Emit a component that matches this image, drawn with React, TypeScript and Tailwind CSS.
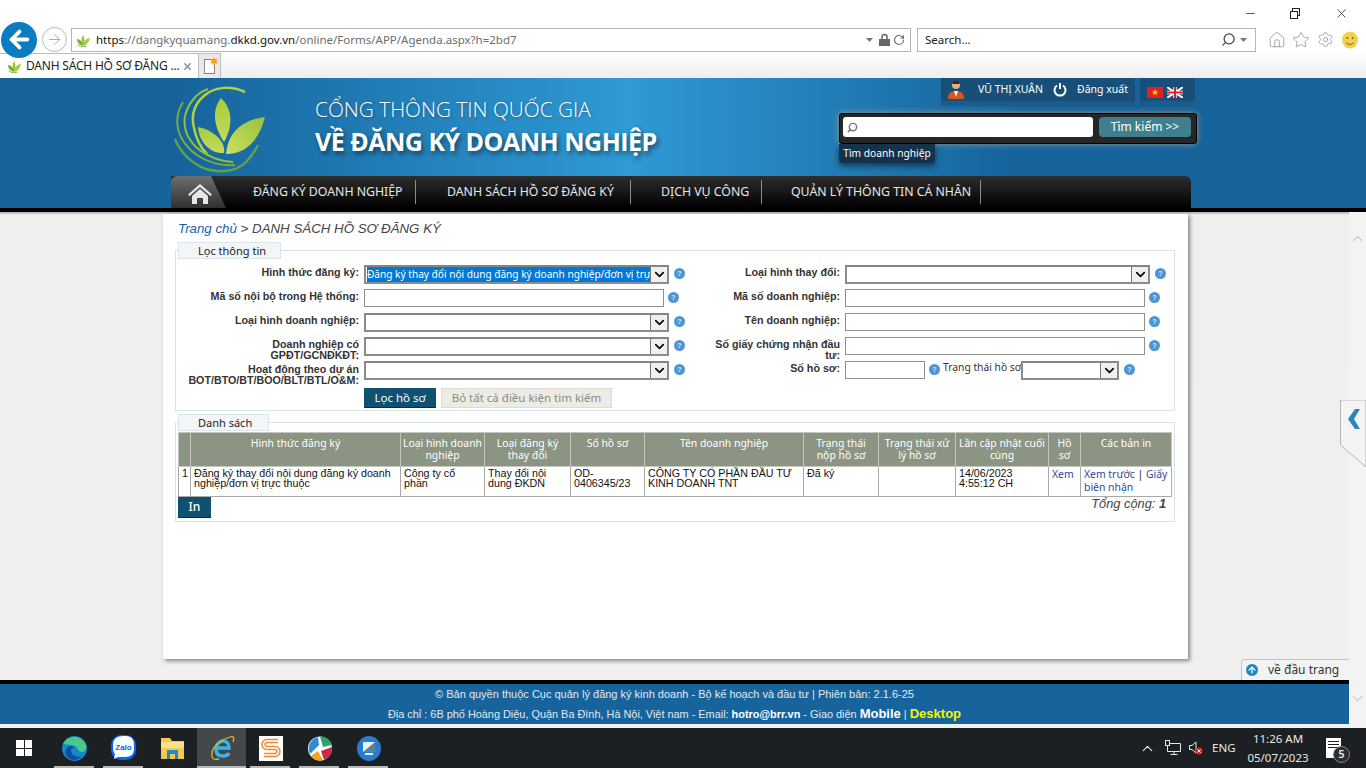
import type { ReactNode } from "react";
import { ChevronUp, Home, RotateCw, Search, Star, Settings, ChevronDown, ArrowRight, ArrowLeft, ArrowUp, X, Minus } from "lucide-react";

const tahoma = "[font-family:'Noto_Sans',sans-serif]";
const arial = "[font-family:'Liberation_Sans',Arial,sans-serif]";

function Favicon() {
  return (
    <svg width="16" height="16" viewBox="0 0 16 16">
      <path d="M8 14C6 10 6 6 8 3c2 3 2 7 0 11z" fill="#9cc23a" />
      <path d="M8 14C4 13 2 10 2 7c3 0 6 3 6 7z" fill="#7fae2c" />
      <path d="M8 14c4-1 6-4 7-8-4 0-7 4-7 8z" fill="#a9cc3f" />
      <path d="M3 13c2 2 6 2 9 1" fill="none" stroke="#5f9a3a" strokeWidth="1" strokeDasharray="2 1" />
    </svg>
  );
}

function Logo() {
  return (
    <svg width="100" height="92" viewBox="1 2 100 92">
      <defs>
        <linearGradient id="leafA" x1="0" y1="0" x2="0" y2="1">
          <stop offset="0" stopColor="#a8cc3c" />
          <stop offset="1" stopColor="#c4da5c" />
        </linearGradient>
        <linearGradient id="leafB" x1="1" y1="0" x2="0" y2="1">
          <stop offset="0" stopColor="#97c23c" />
          <stop offset="1" stopColor="#cce05e" />
        </linearGradient>
      </defs>
      <path d="M51 16C43 26 42 42 54 60C63 45 63 27 51 16z" fill="url(#leafA)" />
      <path d="M28 45C29 60 40 72 54 71C56 60 44 48 28 45z" fill="url(#leafA)" />
      <path d="M95 35C72 38 58 50 56 72C78 72 90 55 95 35z" fill="url(#leafB)" />
      <path d="M75 10C62 4 46 4 35 13C24 22 21 34 24 46C26 56 30 65 37 72" fill="none" stroke="#b4cf3f" strokeWidth="2.5" />
      <path d="M38 7C26 11 18 22 15 34C13 46 17 56 26 65C36 74 48 79 63 80" fill="none" stroke="#8fbf3c" strokeWidth="2" />
      <path d="M13 20C8 28 6 38 8 47C11 60 22 72 36 78C45 82 55 84 65 83" fill="none" stroke="#7fb03a" strokeWidth="1.8" />
      <path d="M5 57C10 70 22 82 36 87C50 91 66 90 76 80C81 75 85 69 88 63" fill="none" stroke="#62a24a" strokeWidth="2.4" />
    </svg>
  );
}

function HelpIcon({ className = "" }: { className?: string }) {
  return (
    <span className={`inline-flex h-[11px] w-[11px] shrink-0 items-center justify-center rounded-full bg-[#4f94d4] text-[7px] font-bold leading-none text-[#d8e8f6] ${arial} ${className}`}>
      ?
    </span>
  );
}

function FakeSelect({ w, text }: { w: number; text?: string }) {
  return (
    <div style={{ width: w }} className="flex h-[19px] shrink-0 items-stretch border-2 border-[#8c8c8c] border-t-[#858585] bg-white">
      <div className="flex min-w-0 flex-1 items-center overflow-hidden pl-[1px]">
        {text && (
          <span className={`block h-[15px] w-full whitespace-nowrap bg-[#0078d7] text-[10.1px] leading-[15px] text-white ${tahoma}`}>{text}</span>
        )}
      </div>
      <div className="flex w-[17px] items-center justify-center border-l border-[#777] bg-[#efefef]">
        <ChevronDown size={15} strokeWidth={2.6} className="text-black" />
      </div>
    </div>
  );
}

function FakeInput({ w }: { w: number }) {
  return <div style={{ width: w }} className="h-[18px] shrink-0 border border-[#8f8f8f] bg-white" />;
}

function FormRow({ label, labelW, labelClass, children }: { label: string; labelW: number; labelClass?: string; children: ReactNode }) {
  return (
    <div className="flex h-[24px] items-start">
      <div style={{ width: labelW }} className={`mr-[5px] shrink-0 text-right text-[10.7px] font-bold leading-[11px] text-[#333] ${arial} ${labelClass ?? "pt-[2px]"}`}>
        {label}
      </div>
      {children}
    </div>
  );
}

function Legend({ w, children }: { w: number; children: ReactNode }) {
  return (
    <div style={{ width: w }} className={`ml-[3px] h-[17px] border border-[#dbe6ec] bg-[#f3f5f9] pl-[19px] text-[11px] leading-[15px] text-[#222] ${tahoma}`}>
      {children}
    </div>
  );
}

function Chrome() {
  return (
    <div className={`relative h-[78px] shrink-0 bg-white ${tahoma}`}>
      <div className="flex h-[27px] items-center justify-end text-[#222]">
        <Minus size={13} strokeWidth={1.4} className="mr-[33px]" />
        <span className="relative mr-[33px] h-[11px] w-[11px]">
          <span className="absolute left-[2px] top-0 h-[8px] w-[8px] border border-[#222]" />
          <span className="absolute bottom-0 left-0 h-[8px] w-[8px] border border-[#222] bg-white" />
        </span>
        <X size={15} strokeWidth={1.2} className="mr-[17px]" />
      </div>
      <div className="flex h-[25px] items-center">
        <div className="z-10 ml-[1px] flex h-[36px] w-[36px] items-center justify-center rounded-full bg-[#0a7cc1]">
          <ArrowLeft size={27} strokeWidth={3.4} className="text-white" />
        </div>
        <div className="ml-[5px] flex h-[25px] w-[25px] items-center justify-center rounded-full border border-[#b9b9b9]">
          <ArrowRight size={17} strokeWidth={1.3} className="text-[#a5a5a5]" />
        </div>
        <div className="ml-[4px] flex h-[24px] w-[840px] items-center border border-[#b5b5b5] pl-[3px]">
          <Favicon />
          <div className="ml-[5px] flex-1 text-[11.5px] text-[#6d6d6d]">
            <span className="text-[#111]">https</span>://dangkyquamang.<span className="text-[#111]">dkkd.gov.vn</span>/online/Forms/APP/Agenda.aspx?h=2bd7
          </div>
          <svg width="7" height="4" viewBox="0 0 7 4" className="mr-[6px]"><path d="M0 0h7L3.5 4z" fill="#777" /></svg>
          <svg width="11" height="13" viewBox="0 0 11 13" className="mr-[3px]">
            <path d="M3 6V4a2.500 2.500 0 0 1 5 0v2" fill="none" stroke="#666" strokeWidth="1.5" />
            <rect y="6" width="11" height="7" fill="#666" />
          </svg>
          <RotateCw size={12} strokeWidth={2.2} className="mr-[5px] text-[#666]" />
        </div>
        <div className="ml-[6px] flex h-[24px] w-[339px] items-center border border-[#b5b5b5] pl-[7px] text-[11.5px] text-[#222]">
          <span className="flex-1">Search...</span>
          <Search size={15} strokeWidth={2} className="mr-[4px] -scale-x-100 text-[#444]" />
          <svg width="7" height="4" viewBox="0 0 7 4" className="mr-[8px]"><path d="M0 0h7L3.5 4z" fill="#777" /></svg>
        </div>
        <Home size={18} strokeWidth={1} className="ml-[12px] text-[#8a8a8a]" />
        <Star size={18} strokeWidth={1} className="ml-[6px] text-[#8a8a8a]" />
        <Settings size={17} strokeWidth={1} className="ml-[7px] text-[#8a8a8a]" />
        <svg width="16" height="18" viewBox="0 0 16 18" className="ml-[8px]">
          <ellipse cx="8" cy="9" rx="8" ry="8.6" fill="#f0d24c" />
          <circle cx="5.3" cy="7" r="1" fill="#7a6a20" />
          <circle cx="10.7" cy="7" r="1" fill="#7a6a20" />
          <path d="M4 11.5c2 2.500 6 2.500 8 0" fill="none" stroke="#7a6a20" strokeWidth="1" />
        </svg>
      </div>
      <div className="flex h-[26px] items-end bg-[linear-gradient(180deg,#ffffff_0%,#eeeeee_100%)]">
        <div className="flex h-[25px] w-[199px] items-center border-r border-t border-[#bdbdbd] bg-white pl-[6px] text-[#1d1d1d]">
          <Favicon />
          <span className="ml-[4px] whitespace-nowrap text-[12px] tracking-[-0.2px]">DANH SÁCH HỒ SƠ ĐĂNG ...</span>
          <X size={11} strokeWidth={3} className="ml-auto mr-[5px] text-[#888]" />
        </div>
        <div className="flex h-[25px] w-[22px] items-center justify-center border-r border-t border-[#bdbdbd] bg-[#e9e9e9]">
          <span className="relative block h-[15px] w-[11px] border border-[#888] bg-white">
            <span className="absolute -right-[4px] -top-[4px] text-[10px] leading-none text-[#f0a020]">✱</span>
          </span>
        </div>
      </div>
    </div>
  );
}

function Header() {
  const navItems = [
    { t: "ĐĂNG KÝ DOANH NGHIỆP", pl: 27, w: 190 },
    { t: "DANH SÁCH HỒ SƠ ĐĂNG KÝ", pl: 31, w: 215 },
    { t: "DỊCH VỤ CÔNG", pl: 30, w: 131 },
    { t: "QUẢN LÝ THÔNG TIN CÁ NHÂN", pl: 29, w: 219 },
  ];
  return (
    <div className="h-[134px] shrink-0 border-b-4 border-black bg-[linear-gradient(90deg,#16629b_0%,#16629b_12%,#2f9ad4_46%,#16629b_75%,#16629b_100%)]">
      <div className="ml-[171px] flex h-[98px] w-[1026px]">
        <div className="w-[144px] shrink-0 pt-[6px]">
          <Logo />
        </div>
        <div className="w-[524px] shrink-0 pt-[18px] [font-family:'Open_Sans',sans-serif]">
          <div className="text-[20.8px] font-light leading-[26px] text-white [text-shadow:1px_1px_3px_rgba(0,0,0,.25)]">CỔNG THÔNG TIN QUỐC GIA</div>
          <div className="mt-[3px] text-[25px] font-bold leading-[33px] tracking-[-0.5px] text-white [text-shadow:2px_3px_5px_rgba(0,0,0,.5)]">VỀ ĐĂNG KÝ DOANH NGHIỆP</div>
        </div>
        <div className="w-[358px] shrink-0">
          <div className={`flex h-[28px] justify-end pr-[2px] text-[10.5px] text-white ${tahoma}`}>
            <div className="flex w-[194px] items-start bg-[#1a5c8c]">
              <div className="flex h-[23px] w-full items-center whitespace-nowrap bg-[#184f78] pl-[6px]">
                <svg width="18" height="20" viewBox="0 0 18 20">
                  <circle cx="9" cy="5" r="4" fill="#e0b184" />
                  <path d="M5 3c1-3 7-3 8 0l-1 1H6z" fill="#3a2a1e" />
                  <path d="M1 19c0-6 3-8 8-8s8 2 8 8z" fill="#d9541e" />
                  <path d="M7 11h4l-2 6z" fill="#fff" />
                </svg>
                <span className="ml-[13px]">VŨ THỊ XUÂN</span>
                <svg width="14" height="15" viewBox="0 0 14 15" className="ml-[10px]">
                  <path d="M4 3.5a5.500 5.500 0 1 0 6 0" fill="none" stroke="#fff" strokeWidth="2" />
                  <path d="M7 1v6" stroke="#fff" strokeWidth="2" />
                </svg>
                <span className="ml-[10px]">Đăng xuất</span>
              </div>
            </div>
            <div className="ml-[5px] flex w-[55px] items-start bg-[#1a5c8c]">
              <div className="flex h-[23px] w-full items-center bg-[#184f78] pl-[7px] pt-[5px]">
                <svg width="16" height="11" viewBox="0 0 16 11">
                  <rect width="16" height="11" fill="#e8201c" />
                  <path d="M8 2l.9 2.400h2.500l-2 1.500.8 2.400-2.200-1.500-2.200 1.500.8-2.400-2-1.500h2.500z" fill="#f7e017" />
                </svg>
                <svg width="16" height="11" viewBox="0 0 16 11" className="ml-[4px]">
                  <rect width="16" height="11" fill="#2c3f86" />
                  <path d="M0 0l16 11M16 0L0 11" stroke="#fff" strokeWidth="2" />
                  <path d="M8 0v11M0 5.500h16" stroke="#fff" strokeWidth="3.500" />
                  <path d="M8 0v11M0 5.500h16" stroke="#d22" strokeWidth="2" />
                </svg>
              </div>
            </div>
          </div>
          <div className={`mt-[7px] flex h-[31px] items-start rounded-[3px] border border-black bg-[#262626] pl-[3px] pt-[3px] shadow-[0_0_6px_rgba(200,170,130,.7)] ${tahoma}`}>
            <div className="flex h-[20px] w-[250px] items-center rounded-[3px] bg-white pl-[4px]">
              <Search size={11} strokeWidth={3.2} className="-scale-x-100 text-[#777]" />
            </div>
            <div className="ml-[6px] flex h-[20px] w-[92px] items-center justify-center rounded-[4px] bg-[#3f7f8e] text-[12px] text-white">Tìm kiếm &gt;&gt;</div>
          </div>
          <div className={`h-[19px] w-[96px] rounded-b-[3px] bg-[#16324a] text-center text-[10.2px] leading-[18px] text-white shadow-[0_3px_6px_rgba(0,0,0,.5)] ${tahoma}`}>Tìm doanh nghiệp</div>
        </div>
      </div>
      <div className={`ml-[171px] flex h-[32px] w-[1020px] items-center rounded-tr-[6px] bg-[linear-gradient(180deg,#2e2e2e_0%,#000000_100%)] text-[12.3px] text-[#e6e6e6] ${tahoma}`}>
        <div className="relative h-[32px] w-[55px] shrink-0 overflow-hidden rounded-tl-[6px]">
          <div className="absolute inset-0 bg-[linear-gradient(180deg,#6f6f6f_0%,#2f2f2f_100%)] [clip-path:polygon(0_0,40px_0,55px_32px,0_32px)]" />
          <svg width="24" height="20" viewBox="0 0 24 20" className="absolute left-[17px] top-[8px]">
            <path d="M12 0L0 10.500l1.500 1.500L12 3l10.500 9L24 10.500z" fill="#e8e8e8" />
            <path d="M4 12L12 5l8 7v8h-5v-6h-6v6H4z" fill="#e8e8e8" />
          </svg>
        </div>
        {navItems.map((n) => (
          <div key={n.t} style={{ paddingLeft: n.pl, width: n.w }} className="flex h-[24px] shrink-0 items-center whitespace-nowrap border-r border-[#8c8c8c] pt-[1px]">
            {n.t}
          </div>
        ))}
      </div>
    </div>
  );
}

function FilterBox() {
  return (
    <div className="ml-[12px] w-[1000px]">
      <div className="relative z-10 h-[17px]"><Legend w={103}>Lọc thông tin</Legend></div>
      <div className="-mt-[9px] h-[161px] border border-[#d6e2e6] pt-[14px]">
        <div className="flex">
          <div className="w-[490px] shrink-0">
            <FormRow label="Hình thức đăng ký:" labelW={183}>
              <FakeSelect w={305} text="Đăng ký thay đổi nội dung đăng ký doanh nghiệp/đơn vị trự" />
              <HelpIcon className="ml-[5px] mt-[3px]" />
            </FormRow>
            <FormRow label="Mã số nội bộ trong Hệ thống:" labelW={183}>
              <FakeInput w={300} />
              <HelpIcon className="ml-[4px] mt-[3px]" />
            </FormRow>
            <FormRow label="Loại hình doanh nghiệp:" labelW={183}>
              <FakeSelect w={305} />
              <HelpIcon className="ml-[5px] mt-[3px]" />
            </FormRow>
            <FormRow label="Doanh nghiệp có GPĐT/GCNĐKĐT:" labelW={183} labelClass="pt-[2px] pl-[60px]">
              <FakeSelect w={305} />
              <HelpIcon className="ml-[5px] mt-[3px]" />
            </FormRow>
            <FormRow label="Hoạt động theo dự án BOT/BTO/BT/BOO/BLT/BTL/O&M:" labelW={183} labelClass="pt-[3px]">
              <FakeSelect w={305} />
              <HelpIcon className="ml-[5px] mt-[3px]" />
            </FormRow>
          </div>
          <div className="flex-1">
            <FormRow label="Loại hình thay đổi:" labelW={174}>
              <FakeSelect w={305} />
              <HelpIcon className="ml-[5px] mt-[3px]" />
            </FormRow>
            <FormRow label="Mã số doanh nghiệp:" labelW={174}>
              <FakeInput w={300} />
              <HelpIcon className="ml-[4px] mt-[3px]" />
            </FormRow>
            <FormRow label="Tên doanh nghiệp:" labelW={174}>
              <FakeInput w={300} />
              <HelpIcon className="ml-[4px] mt-[3px]" />
            </FormRow>
            <FormRow label="Số giấy chứng nhận đầu tư:" labelW={174} labelClass="pt-[2px] pl-[46px]">
              <FakeInput w={300} />
              <HelpIcon className="ml-[4px] mt-[3px]" />
            </FormRow>
            <FormRow label="Số hồ sơ:" labelW={174}>
              <FakeInput w={80} />
              <HelpIcon className="ml-[4px] mt-[3px]" />
              <span className={`ml-[3px] w-[78px] shrink-0 whitespace-nowrap text-[10.3px] leading-[13px] text-[#333] ${tahoma}`}>Trạng thái hồ sơ</span>
              <FakeSelect w={98} />
              <HelpIcon className="ml-[5px] mt-[3px]" />
            </FormRow>
          </div>
        </div>
        <div className={`ml-[188px] mt-[3px] flex h-[20px] text-[11.5px] ${tahoma}`}>
          <div className="flex w-[72px] items-center justify-center border-b border-[#0c2a3e] bg-[#0f5170] text-white">Lọc hồ sơ</div>
          <div className="ml-[5px] flex w-[171px] items-center justify-center border border-[#dcdcd0] bg-[#ecece4] text-[#8a8a8a]">Bỏ tất cả điều kiện tìm kiếm</div>
        </div>
      </div>
    </div>
  );
}

const cols = [12, 210, 84, 86, 74, 159, 75, 77, 93, 32, 91];

function ResultTable() {
  const th = `border border-[#c4c8c0] px-[2px] pt-[4px] align-top text-center text-[10.4px] font-normal leading-[12px] text-white ${tahoma}`;
  const td = `border border-[#a9a9a9] px-[3px] pt-[1px] align-top text-[10.7px] leading-[10px] text-[#111] ${arial}`;
  const linkTd = `border border-[#a9a9a9] px-[3px] pt-[1px] align-top text-[10.4px] leading-[13px] text-[#2b4a9a] ${tahoma}`;
  return (
    <table className="ml-[2px] w-[993px] table-fixed border-collapse">
      <colgroup>
        {cols.map((c, i) => (
          <col key={i} style={{ width: c }} />
        ))}
      </colgroup>
      <thead>
        <tr className="h-[34px] bg-[#8c9584]">
          <th className={th} />
          <th className={th}>Hình thức đăng ký</th>
          <th className={th}>Loại hình doanh nghiệp</th>
          <th className={th}>Loại đăng ký thay đổi</th>
          <th className={th}>Số hồ sơ</th>
          <th className={th}>Tên doanh nghiệp</th>
          <th className={th}>Trạng thái nộp hồ sơ</th>
          <th className={th}>Trạng thái xử lý hồ sơ</th>
          <th className={th}>Lần cập nhật cuối cùng</th>
          <th className={th}>Hồ sơ</th>
          <th className={th}>Các bản in</th>
        </tr>
      </thead>
      <tbody>
        <tr className="h-[30px] bg-white">
          <td className={td}>1</td>
          <td className={td}>Đăng ký thay đổi nội dung đăng ký doanh nghiệp/đơn vị trực thuộc</td>
          <td className={`${td} pr-[14px]`}>Công ty cổ phần</td>
          <td className={td}>Thay đổi nội dung ĐKDN</td>
          <td className={td}>OD-0406345/23</td>
          <td className={td}>CÔNG TY CỔ PHẦN ĐẦU TƯ KINH DOANH TNT</td>
          <td className={td}>Đã ký</td>
          <td className={td} />
          <td className={td}>14/06/2023 4:55:12 CH</td>
          <td className={linkTd}>Xem</td>
          <td className={linkTd}>
            <div className="whitespace-nowrap">
              Xem trước <span className="text-[#222]">|</span> Giấy
            </div>
            <div>biên nhận</div>
          </td>
        </tr>
      </tbody>
    </table>
  );
}

function ListBox() {
  return (
    <div className="ml-[12px] mt-[3px] w-[1000px]">
      <div className="relative z-10 h-[18px]"><Legend w={91}>Danh sách</Legend></div>
      <div className="-mt-[10px] h-[100px] border border-[#d6e2e6] pt-[9px]">
        <ResultTable />
        <div className="flex items-start">
          <div className={`ml-[2px] flex h-[21px] w-[33px] items-center justify-center border-b border-[#0c2a3e] bg-[#0f5170] text-[12px] font-medium text-white ${tahoma}`}>In</div>
          <div className={`ml-auto mr-[8px] text-[12.8px] italic leading-[14px] text-[#444] ${arial}`}>
            Tổng cộng: <b>1</b>
          </div>
        </div>
      </div>
    </div>
  );
}

function Footer() {
  return (
    <div className="h-[48px] shrink-0 bg-[#f0f0f0]">
      <div className={`h-[44px] border-t-4 border-black bg-[#17649c] text-center text-[#e2e8ee] ${arial}`}>
        <div className="pt-[2px] text-[11px] leading-[16px]">© Bản quyền thuộc Cục quản lý đăng ký kinh doanh - Bộ kế hoạch và đầu tư | Phiên bản: 2.1.6-25</div>
        <div className="mt-[2px] text-[10.9px] leading-[20px]">
          Địa chỉ : 6B phố Hoàng Diệu, Quận Ba Đình, Hà Nội, Việt nam - Email: <b className="text-white">hotro@brr.vn</b> - Giao diện <b className="text-[13px] text-white">Mobile</b> | <b className="text-[13px] text-[#f5f500]">Desktop</b>
        </div>
      </div>
    </div>
  );
}

function Scrollbar() {
  return (
    <div className="relative flex w-[17px] shrink-0 flex-col items-center justify-between bg-[#f3f3f3] pb-[21px] pt-[18px]">
      <ChevronUp size={17} strokeWidth={1.5} className="text-[#c8c8c8]" />
      <ChevronDown size={17} strokeWidth={1.5} className="text-[#c8c8c8]" />
    </div>
  );
}

function TaskIcon({ children, active, mark = true }: { children: ReactNode; active?: boolean; mark?: boolean }) {
  return (
    <div className={`relative flex h-[40px] w-[49px] items-center justify-center ${active ? "bg-[#45484b]" : ""}`}>
      {children}
      {mark && <span className={`absolute bottom-0 h-[2px] bg-[#b8b8b8] ${active ? "left-0 right-0" : "left-[4px] right-[5px]"}`} />}
    </div>
  );
}

function Taskbar() {
  return (
    <div className={`flex h-[40px] shrink-0 items-center bg-[#1c2022] text-[#e6e6e6] ${tahoma}`}>
      <div className="ml-[16px] grid h-[16px] w-[16px] grid-cols-2 gap-[1px]">
        <span className="bg-white" /><span className="bg-white" /><span className="bg-white" /><span className="bg-white" />
      </div>
      <div className="ml-[18px] flex">
        <TaskIcon>
          <svg width="25" height="25" viewBox="0 0 25 25">
            <circle cx="12.5" cy="12.5" r="12.5" fill="#1689c9" />
            <path d="M1 8C5 -1 20 -2 24 9c1 4-1 7-4 7-5 0-3-4-7-6C8 8 3 9 1 8z" fill="#49c88c" />
            <path d="M9 14c0 5 5 8 11 6-4 6-13 5-16-1-2-4 1-9 5-9 2 0 3 1 3 2-2 0-3 1-3 2z" fill="#0d4f9e" />
          </svg>
        </TaskIcon>
        <TaskIcon>
          <svg width="25" height="26" viewBox="0 0 25 26">
            <rect width="25" height="25" rx="10" fill="#0068ff" />
            <path d="M2 10c0-6 4-9 10-9h3c6 0 8 4 8 9v4c0 5-3 8-9 8H7l-4 2 1-5c-2-2-2-5-2-9z" fill="#fff" />
            <text x="12.5" y="15" textAnchor="middle" fontSize="8" fontWeight="700" fill="#0068ff" fontFamily="Liberation Sans">Zalo</text>
          </svg>
        </TaskIcon>
        <TaskIcon mark={false}>
          <svg width="23" height="22" viewBox="0 0 23 22">
            <path d="M0 1h9l2 3h12v18H0z" fill="#f2c94c" />
            <path d="M0 5h23v6H0z" fill="#fbe08a" />
            <path d="M6 13h11v9h-3v-5H9v5H6z" fill="#1e88d2" />
          </svg>
        </TaskIcon>
        <TaskIcon active>
          <svg width="26" height="28" viewBox="0 0 26 28">
            <path d="M7 14h13c0-5-3-7-6-7s-7 3-7 8 3 7 7 7c3 0 5-1 6-3" fill="none" stroke="#37b4ee" strokeWidth="3.5" />
            <path d="M21 3c3-1 5 0 3 5M3 22C2 15 8 7 21 3M3 22c0 3 2 4 7 3" fill="none" stroke="#e7b81e" strokeWidth="1.3" />
          </svg>
        </TaskIcon>
        <TaskIcon>
          <svg width="24" height="25" viewBox="0 0 24 25">
            <rect width="24" height="25" fill="#fff" />
            <path d="M19 5H8a3.500 3.500 0 0 0 0 7h8a3.500 3.500 0 0 1 0 7H5" fill="none" stroke="#f08a32" strokeWidth="4.5" />
            <path d="M19 5H8a3.500 3.500 0 0 0 0 7h8a3.500 3.500 0 0 1 0 7H5" fill="none" stroke="#fff" strokeWidth="1.6" />
          </svg>
        </TaskIcon>
        <TaskIcon>
          <svg width="24" height="25" viewBox="0 0 24 25">
            <circle cx="12" cy="12.5" r="12" fill="#fff" />
            <path d="M12 .5A12 12 0 0 1 24 9L15 11z" fill="#2fa36b" />
            <path d="M24 11A12 12 0 0 1 16 24L13 15z" fill="#c62a45" />
            <path d="M15 24.5A12 12 0 0 1 3 20l7-5z" fill="#f5a21f" />
            <path d="M2 18A12 12 0 0 1 10 1l1 8z" fill="#2b8cd8" />
          </svg>
        </TaskIcon>
        <TaskIcon>
          <svg width="24" height="25" viewBox="0 0 24 25">
            <ellipse cx="12" cy="12.5" rx="12" ry="12.5" fill="#2a7ad0" />
            <rect x="6" y="6" width="12" height="10" fill="#e8f2fb" />
            <path d="M6 16l12-10v10z" fill="#5a7f9f" />
            <rect x="8" y="17" width="8" height="2" fill="#e8f2fb" />
          </svg>
        </TaskIcon>
      </div>
      <div className="ml-auto flex items-center">
        <ChevronUp size={17} strokeWidth={1.5} />
        <svg width="17" height="16" viewBox="0 0 17 16" className="ml-[9px]" fill="none" stroke="#e6e6e6">
          <path d="M2.5 3.5h13v8h-13zM9 11.500v3M5.500 14.500h7" />
          <rect x=".5" y=".5" width="4" height="5" fill="#1c2022" />
        </svg>
        <svg width="14" height="16" viewBox="0 0 14 16" className="ml-[7px]">
          <path d="M.5 5.5h2.500l4-3.500v11l-4-3.500H.5z" fill="none" stroke="#e6e6e6" />
          <circle cx="10" cy="11" r="3.5" fill="#d9252a" />
          <path d="M8.5 9.500l3 3m0-3l-3 3" stroke="#fff" />
        </svg>
        <span className="ml-[9px] w-[24px] whitespace-nowrap text-[11.5px]">ENG</span>
        <div className="ml-[9px] w-[66px] text-center text-[11.5px] leading-[19px]">
          <div>11:26 AM</div>
          <div>05/07/2023</div>
        </div>
        <div className="relative ml-[15px] mr-[25px] h-[20px] w-[15px] bg-white">
          <span className="mx-[2px] mt-[3px] block h-[1px] bg-[#1c2022]" />
          <span className="mx-[2px] mt-[2px] block h-[1px] bg-[#1c2022]" />
          <span className="mx-[2px] mt-[2px] block h-[1px] bg-[#1c2022]" />
          <span className="absolute -bottom-[5px] -right-[9px] flex h-[17px] w-[17px] items-center justify-center rounded-full border border-[#888] bg-[#2a2d2f] text-[11px] font-semibold">5</span>
        </div>
      </div>
    </div>
  );
}

export default function App() {
  return (
    <div className="flex h-[768px] w-[1366px] flex-col overflow-hidden bg-[#f0f0f0]">
      <Chrome />
      <Header />
      <div className="relative flex min-h-0 flex-1">
        <div className="flex min-w-0 flex-1 flex-col bg-[linear-gradient(180deg,#a8a8a8_0px,#efefef_3px,#f0f0f0_100%)]">
          <div className="relative flex-1">
            <div className="ml-[163px] mt-[2px] h-[445px] w-[1025px] bg-white shadow-[2px_2px_4px_rgba(0,0,0,.45)]">
              <div className={`ml-[15px] h-[28px] pt-[7px] text-[13.3px] italic leading-[16px] text-[#444] ${arial}`}>
                <span className="text-[#1b5fa8]">Trang chủ</span> &gt; DANH SÁCH HỒ SƠ ĐĂNG KÝ
              </div>
              <FilterBox />
              <ListBox />
            </div>
            <div className={`absolute bottom-0 right-0 flex h-[21px] w-[108px] items-center rounded-tl-[4px] border border-b-0 border-r-0 border-[#c4c4c4] bg-[#f3f3f3] pl-[3px] text-[12px] text-[#333] ${tahoma}`}>
              <span className="flex h-[14px] w-[14px] items-center justify-center rounded-full border border-white bg-[#1f86c8]">
                <ArrowUp size={10} strokeWidth={3} className="text-white" />
              </span>
              <span className="ml-[9px]">về đầu trang</span>
            </div>
          </div>
          <Footer />
        </div>
        <Scrollbar />
        <div className="absolute right-0 top-[188px] h-[67px] w-[26px]">
          <svg width="26" height="67" viewBox="0 0 26 67">
            <path d="M.5 0v45L26 67V0z" fill="#f4f4f4" stroke="#b5b5b5" />
            <path d="M15 9L8 19l7 10h5l-6-10 6-10z" fill="#2a86b8" />
          </svg>
        </div>
      </div>
      <Taskbar />
    </div>
  );
}
